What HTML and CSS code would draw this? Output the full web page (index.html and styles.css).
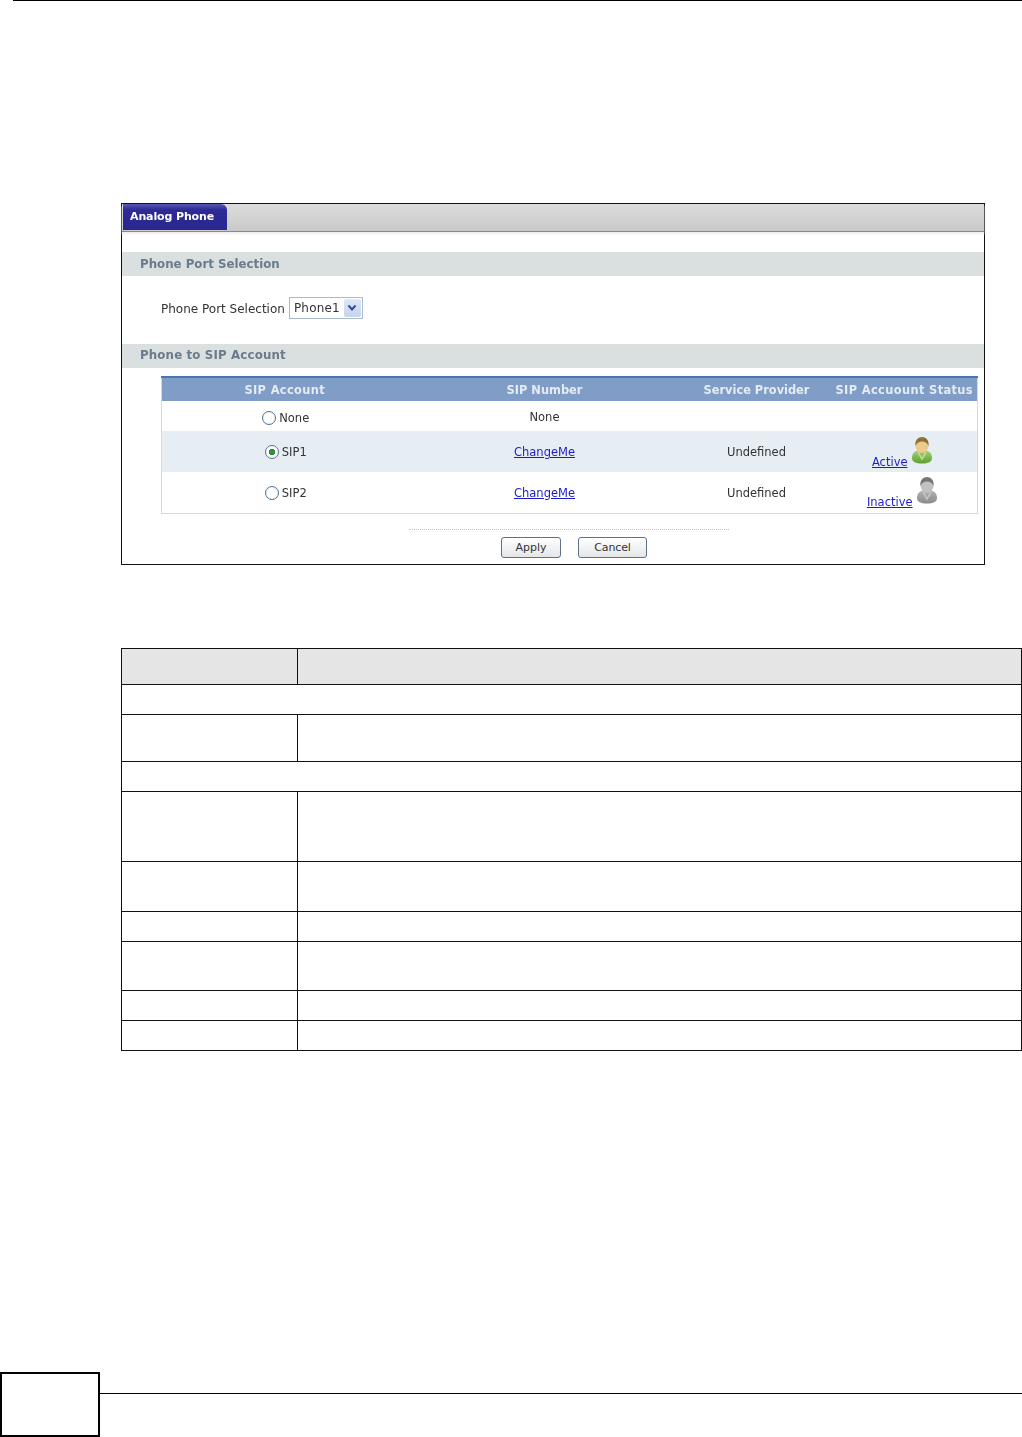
FILE: index.html
```html
<!DOCTYPE html>
<html lang="en">
<head>
<meta charset="utf-8">
<title>Analog Phone</title>
<link rel="stylesheet" href="styles.css">
</head>
<body>
<div class="page">
  <div class="top-rule"></div>
  <main class="content">
    <section class="panel">
      <div class="tabbar"><div class="tab">Analog Phone</div></div>
      <h2 class="section first">Phone Port Selection</h2>
      <div class="port-row">
        <span class="port-label">Phone Port Selection</span>
        <span class="select"><span class="select-value">Phone1</span><span class="select-btn"><svg width="10" height="8" viewBox="0 0 10 8"><path d="M1.500 1.500 5 5.500 8.500 1.500" fill="none" stroke="#2c4f9e" stroke-width="2"/></svg></span></span>
      </div>
      <h2 class="section second">Phone to SIP Account</h2>
      <div class="sip-wrap">
        <table class="sip">
          <colgroup><col class="c1"><col class="c2"><col class="c3"><col class="c4"></colgroup>
          <thead>
            <tr><th class="wide">SIP Account</th><th>SIP Number</th><th>Service Provider</th><th class="wide">SIP Accuount Status</th></tr>
          </thead>
          <tbody>
            <tr class="r-none">
              <td><span class="radio-none"><span class="radio"></span>None</span></td><td class="up">None</td><td></td><td></td>
            </tr>
            <tr class="r-tall alt">
              <td><span class="radio-sip"><span class="radio on"></span>SIP1</span></td><td class="up"><a href="#">ChangeMe</a></td><td class="up">Undefined</td>
              <td class="status"><a href="#">Active</a><svg class="user" width="20" height="27" viewBox="0 0 20 27"><defs><linearGradient id="g1" x1="0" y1="0" x2="0" y2="1"><stop offset="0" stop-color="#a8d474"/><stop offset="1" stop-color="#5f9f35"/></linearGradient></defs><path d="M0 21c0-5 3-8 10-8s10 3 10 8c0 4-4 5.500-10 5.500S0 25 0 21z" fill="url(#g1)"/><path d="M6 15l4 7 4-7" fill="none" stroke="#c2e29a" stroke-width="1.500"/><ellipse cx="10" cy="8.500" rx="6.500" ry="7.500" fill="#ecca8c"/><path d="M3.500 9C2.500 3 6.500 0 10 0s7.500 3 6.500 9c-1-3-3.500-4.500-6.500-4.500S4.500 6 3.500 9z" fill="#8f7038"/></svg></td>
            </tr>
            <tr class="r-tall last">
              <td><span class="radio-sip"><span class="radio"></span>SIP2</span></td><td class="up"><a href="#">ChangeMe</a></td><td class="up">Undefined</td>
              <td class="status"><a href="#">Inactive</a><svg class="user" width="20" height="27" viewBox="0 0 20 27"><defs><linearGradient id="g2" x1="0" y1="0" x2="0" y2="1"><stop offset="0" stop-color="#b5b5b5"/><stop offset="1" stop-color="#8a8a8a"/></linearGradient></defs><path d="M0 21c0-5 3-8 10-8s10 3 10 8c0 4-4 5.500-10 5.500S0 25 0 21z" fill="url(#g2)"/><path d="M6 15l4 7 4-7" fill="none" stroke="#c9c9c9" stroke-width="1.500"/><ellipse cx="10" cy="8.500" rx="6.500" ry="7.500" fill="#c2c2c2"/><path d="M3.500 9C2.500 3 6.500 0 10 0s7.500 3 6.500 9c-1-3-3.500-4.500-6.500-4.500S4.500 6 3.500 9z" fill="#777"/></svg></td>
            </tr>
          </tbody>
        </table>
      </div>
      <div class="actions">
        <div class="dotted"></div>
        <div class="buttons">
          <button class="btn apply" type="button">Apply</button>
          <button class="btn cancel" type="button">Cancel</button>
        </div>
      </div>
    </section>

    <table class="doc">
      <colgroup><col class="d1"><col class="d2"></colgroup>
      <tr class="h36 head"><td></td><td></td></tr>
      <tr class="h30"><td colspan="2"></td></tr>
      <tr class="h47"><td></td><td></td></tr>
      <tr class="h30"><td colspan="2"></td></tr>
      <tr class="h70"><td></td><td></td></tr>
      <tr class="h50"><td></td><td></td></tr>
      <tr class="h30"><td></td><td></td></tr>
      <tr class="h49"><td></td><td></td></tr>
      <tr class="h30"><td></td><td></td></tr>
      <tr class="h30"><td></td><td></td></tr>
    </table>
  </main>
  <footer class="footer">
    <div class="page-box"></div>
    <div class="footer-rule"></div>
  </footer>
</div>
</body>
</html>
```
FILE: styles.css
```css
* { box-sizing: border-box; }
html, body { margin: 0; padding: 0; background: #fff; }
.page { width: 1022px; height: 1437px; display: flex; flex-direction: column; overflow: hidden; font-family: "DejaVu Sans", sans-serif; color: #333; font-size: 12px; }
.top-rule { height: 1px; margin-left: 13px; background: #000; flex: none; }
.content { flex: 1; padding: 202px 0 0 121px; }

.panel { width: 864px; height: 362px; border: 1px solid #111; display: flex; flex-direction: column; background: #fff; }
.tabbar { height: 28px; flex: none; padding-left: 1px; background: linear-gradient(#dcdcdc, #c9c9c9); border-bottom: 1px solid #8a8a8a; box-shadow: 0 2px 2px #eee; }
.tab { width: 104px; height: 26px; padding: 6px 0 0 7px; color: #fff; font-weight: bold; font-size: 11px; letter-spacing: -0.12px; background: linear-gradient(#5a58b4 0, #2e2a96 22%, #2b2790 100%); border-top-right-radius: 6px; line-height: 14px; filter: blur(0.3px); }

.section { margin: 0; height: 24px; padding-left: 18px; background: #d9e0df; color: #6a7b8d; font-size: 11.8px; font-weight: bold; flex: none; filter: blur(0.3px); }
.section.first { margin-top: 20px; line-height: 25px; }
.section.second { margin-top: 0; line-height: 23px; letter-spacing: 0.15px; }

.port-row { height: 68px; flex: none; padding: 0 0 0 39px; display: flex; align-items: center; gap: 4px; }
.port-label { margin-top: -2px; filter: blur(0.3px); }
.select { width: 74px; height: 22px; margin-top: -4px; border: 1px solid #a9bad0; display: flex; align-items: center; justify-content: space-between; padding: 1px; filter: blur(0.3px); }
.select-value { padding-left: 3px; letter-spacing: 0.2px; }
.select-btn { width: 17px; height: 18px; background: linear-gradient(#dfe7f5, #c6d3ec); display: flex; align-items: center; justify-content: center; border-radius: 2px; }

.sip-wrap { padding: 8px 7px 0 39px; flex: none; }
.sip { width: 816px; table-layout: fixed; border-collapse: collapse; border-left: 1px solid #d6dada; border-right: 1px solid #d6dada; border-bottom: 1px solid #d6dada; filter: blur(0.3px); }
.c1 { width: 246px; } .c2 { width: 274px; } .c3 { width: 150px; } .c4 { width: 146px; }
.sip th { height: 24px; padding: 0; background: #7f9dc6; border-top: 2px solid #4a75ab; color: #e4ebf2; font-size: 11.4px; font-weight: bold; text-align: center; line-height: 20px; }
.sip th.wide { letter-spacing: 0.38px; }
.sip td { padding: 0; text-align: center; color: #333; font-size: 11.5px; }
.r-none { height: 30px; }
.r-tall { height: 41px; }
.alt td { background: #e6eef4; }
.sip td.up { padding-top: 1px; }
a { color: #1c1ccb; text-decoration: underline; }
.radio-none, .radio-sip { display: inline-flex; align-items: center; gap: 3px; }
.radio-none { margin-left: 2px; margin-top: 6px; }
.radio-sip { margin-left: 2px; margin-top: 4px; }
.radio { width: 14px; height: 14px; border-radius: 50%; border: 1px solid #55708f; background: radial-gradient(#fff 50%, #dde6ee); display: inline-block; flex: none; }
.radio.on { background: radial-gradient(#2f8f3a 0 3px, #fff 3.5px); }
.status { white-space: nowrap; }
.sip td.status { padding: 2px 5px 0 0; text-align: center; }
.user { margin-left: 4px; vertical-align: 2px; }

.actions { flex: none; padding-top: 15px; display: flex; flex-direction: column; align-items: flex-start; }
.dotted { width: 320px; margin-left: 287px; border-top: 1px dotted #c4c4c4; }
.buttons { margin: 7px 0 0 379px; display: flex; gap: 17px; }
.btn { height: 21px; padding: 1px 0 0; font-family: inherit; font-size: 11px; color: #333; border: 1px solid #5d7286; border-radius: 3px; background: linear-gradient(#fff, #e4e6e8); }
.apply { width: 60px; }
.cancel { width: 69px; letter-spacing: -0.15px; }

.doc { margin-top: 83px; width: 900px; table-layout: fixed; border-collapse: collapse; }
.d1 { width: 176px; } .d2 { width: 724px; }
.doc td { border: 1px solid #111; padding: 0; }
.head td { background: #e5e5e5; }
.h36 { height: 36px; } .h30 { height: 30px; } .h47 { height: 47px; } .h70 { height: 70px; } .h50 { height: 50px; } .h49 { height: 49px; }

.footer { flex: none; height: 65px; display: flex; }
.page-box { width: 100px; height: 65px; border: 2px solid #000; }
.footer-rule { flex: 1; height: 1px; margin-top: 21px; background: #000; }
```
